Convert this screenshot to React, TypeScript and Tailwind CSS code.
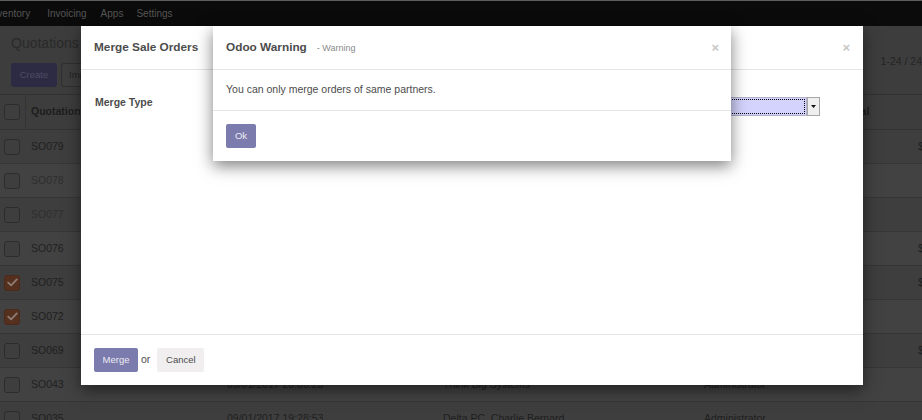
import React from "react";

type Row = {
  no: string;
  date: string;
  customer: string;
  sp: string;
  total: string;
  muted?: boolean;
  checked?: boolean;
};

const rows: Row[] = [
  { no: "SO079", date: "11/01/2017 10:12:40", customer: "Agrolait", sp: "Administrator", total: "$ 1,950.00" },
  { no: "SO078", date: "11/01/2017 09:40:02", customer: "Camptocamp", sp: "Administrator", total: "", muted: true },
  { no: "SO077", date: "10/01/2017 18:22:15", customer: "China Export", sp: "Administrator", total: "", muted: true },
  { no: "SO076", date: "10/01/2017 16:05:31", customer: "Think Big Systems", sp: "Administrator", total: "$ 2,240.00" },
  { no: "SO075", date: "10/01/2017 11:48:19", customer: "Agrolait", sp: "Administrator", total: "$ 750.00", checked: true },
  { no: "SO072", date: "09/01/2017 22:31:07", customer: "Delta PC", sp: "Administrator", total: "", checked: true },
  { no: "SO069", date: "09/01/2017 21:14:44", customer: "Camptocamp", sp: "Administrator", total: "$ 1,120.00" },
  { no: "SO043", date: "09/01/2017 20:06:23", customer: "Think Big Systems", sp: "Administrator", total: "" },
  { no: "SO035", date: "09/01/2017 19:28:53", customer: "Delta PC, Charlie Bernard", sp: "Administrator", total: "" },
];

function Check({ checked }: { checked?: boolean }) {
  if (checked) {
    return (
      <div className="w-[16px] h-[16px] rounded-[3px] bg-[#55301f] border border-[#4a2a1b] flex items-center justify-center">
        <svg width="11" height="9" viewBox="0 0 11 9" fill="none">
          <path d="M1.2 4.6 L4.1 7.4 L9.8 1.4" stroke="#8e7d74" strokeWidth="1.8" strokeLinecap="round" strokeLinejoin="round" />
        </svg>
      </div>
    );
  }
  return <div className="w-[16px] h-[16px] rounded-[3px] border border-[#2c2c2c] bg-[#3e3e3e]" />;
}

export default function App() {
  return (
    <div
      className="relative w-[922px] h-[420px] overflow-hidden bg-[#3d3d3d]"
      style={{ fontFamily: '"Liberation Sans", Arial, sans-serif' }}
    >
      {/* Background page (dimmed) */}
      <div className="flex flex-col w-[1000px]">
        {/* Navbar */}
        <div className="h-[26px] bg-[#0b0b0b] border-t border-[#5e5e5e] flex items-center text-[10px] text-[#555555]">
          <span className="ml-[-11px]">Inventory</span>
          <span className="ml-[17px]">Invoicing</span>
          <span className="ml-[14px]">Apps</span>
          <span className="ml-[13px]">Settings</span>
        </div>
        {/* Control panel */}
        <div className="h-[69px] border-b border-[#323232] bg-[#3d3d3d] flex flex-col px-[11px] relative">
          <div className="h-[9px]" />
          <div className="text-[14px] leading-[17px] text-[#2a2a2a]">Quotations</div>
          <div className="flex items-center mt-[11px] gap-[4px]">
            <div className="h-[24px] w-[46px] rounded-[3px] bg-[#2c2b43] text-[#4c4b66] text-[9.5px] flex items-center justify-center">
              Create
            </div>
            <div className="h-[24px] w-[50px] rounded-[3px] border border-[#2f2f2f] bg-[#3e3e3e] text-[#232323] text-[9.5px] flex items-center pl-[7px]">
              Import
            </div>
            <div className="ml-auto mr-[67px] text-[10.5px] text-[#242424] mt-[-26px]">1-24 / 24</div>
          </div>
        </div>
        {/* Table header */}
        <div className="grid grid-cols-[26px_196px_216px_261px_141px_160px] h-[35px] border-b border-[#333333] bg-[#3d3d3d] text-[10.5px] font-bold text-[#1d1d1d]">
          <div className="flex items-center pl-[4px] border-r border-[#343434]">
            <Check />
          </div>
          <div className="flex items-center pl-[5px]">Quotation Number</div>
          <div className="flex items-center pl-[5px]">Quotation Date</div>
          <div className="flex items-center pl-[5px]">Customer</div>
          <div className="flex items-center pl-[5px]">Salesperson</div>
          <div className="flex items-center pl-[5px]">Total</div>
        </div>
        {/* Rows */}
        {rows.map((r, i) => (
          <div
            key={r.no}
            className={`grid grid-cols-[26px_196px_216px_261px_141px_160px] h-[34px] border-b border-[#363636] text-[10.5px] ${
              i % 2 === 0 ? "bg-[#3e3e3e]" : "bg-[#424242]"
            } ${r.muted ? "text-[#2e2e2e]" : "text-[#1f1f1f]"}`}
          >
            <div className="flex items-center pl-[4px]">
              <Check checked={r.checked} />
            </div>
            <div className="flex items-center pl-[5px]">{r.no}</div>
            <div className="flex items-center pl-[5px]">{r.date}</div>
            <div className="flex items-center pl-[5px]">{r.customer}</div>
            <div className="flex items-center pl-[5px]">{r.sp}</div>
            <div className="flex items-center pl-[78px]">{r.total}</div>
          </div>
        ))}
      </div>

      {/* Merge dialog */}
      <div className="absolute left-[81px] top-[26px] w-[782px] h-[359px] bg-white flex flex-col shadow-[0_5px_15px_rgba(0,0,0,0.5)]">
        <div className="h-[44px] border-b border-[#e5e5e5] flex items-center justify-between pl-[13px] pr-[13px]">
          <span className="text-[11.8px] font-bold text-[#4c4c4c]">Merge Sale Orders</span>
          <span className="text-[13px] font-bold text-[#c6c6c6] leading-none">×</span>
        </div>
        <div className="flex-1 pt-[27px] pl-[14px] pr-[43px]">
          <div className="flex items-start h-[19px]">
            <span className="text-[10.5px] leading-[12px] font-bold text-[#4c4c4c] w-[205px] mt-[-1px]">Merge Type</span>
            <div className="flex-1 flex h-[19px]">
              <div className="flex-1 bg-[#d3d3fd] border border-[#b0b0c8] outline-1 outline-dotted outline-[#000000] outline-offset-[-3px]" />
              <div className="w-[13px] bg-[#efefef] border border-[#a7a7a7] flex items-center justify-center">
                <svg width="5" height="3" viewBox="0 0 5 3">
                  <path d="M0 0 H5 L2.5 3 Z" fill="#111111" />
                </svg>
              </div>
            </div>
          </div>
        </div>
        <div className="h-[51px] border-t border-[#e5e5e5] flex items-center pl-[13px]">
          <div className="h-[24px] w-[44px] rounded-[2px] bg-[#7c7bad] text-[#ececf2] text-[9.5px] flex items-center justify-center">
            Merge
          </div>
          <span className="ml-[3px] text-[10.5px] text-[#4c4c4c]">or</span>
          <div className="ml-[7px] h-[24px] w-[47px] rounded-[2px] bg-[#f0eeee] text-[#4c4c4c] text-[9.5px] flex items-center justify-center">
            Cancel
          </div>
        </div>
      </div>

      {/* Warning dialog */}
      <div className="absolute left-[213px] top-[26px] w-[518px] h-[135px] bg-white flex flex-col shadow-[0_5px_15px_rgba(0,0,0,0.5)]">
        <div className="h-[44px] border-b border-[#e5e5e5] flex items-center justify-between pl-[13px] pr-[12px]">
          <div className="flex items-baseline">
            <span className="text-[11.8px] font-bold text-[#4c4c4c]">Odoo Warning</span>
            <span className="ml-[10px] text-[9px] text-[#8a8a8a]">- Warning</span>
          </div>
          <span className="text-[13px] font-bold text-[#c6c6c6] leading-none">×</span>
        </div>
        <div className="h-[41px] border-b border-[#e5e5e5] flex items-center pl-[13px] text-[10.5px] text-[#4c4c4c]">
          You can only merge orders of same partners.
        </div>
        <div className="flex-1 flex items-center pl-[13px]">
          <div className="h-[24px] w-[30px] rounded-[2px] bg-[#7c7bad] text-[#ececf2] text-[9.5px] flex items-center justify-center">
            Ok
          </div>
        </div>
      </div>
    </div>
  );
}
